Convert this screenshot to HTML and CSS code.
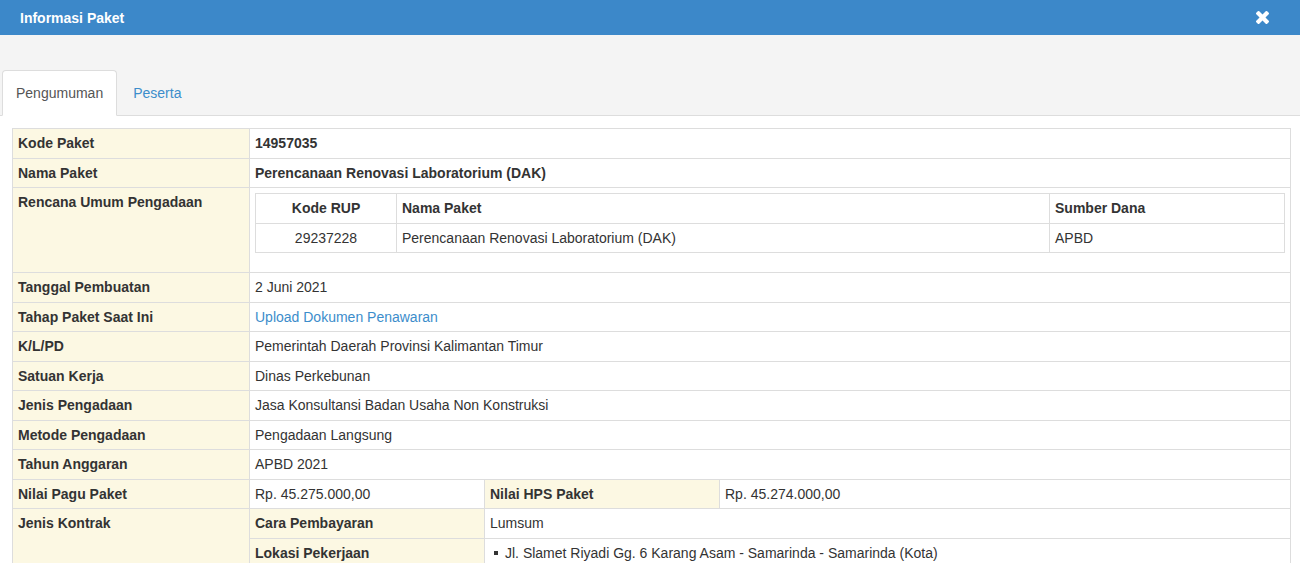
FILE: index.html
```html
<!DOCTYPE html>
<html lang="id">
<head>
<meta charset="utf-8">
<title>Informasi Paket</title>
<link rel="stylesheet" href="styles.css">
</head>
<body>
<div class="modal">
  <div class="modal-header">
    <h4 class="modal-title">Informasi Paket</h4>
    <button class="close" type="button" aria-label="Tutup">
      <svg viewBox="0 0 1188 1188" width="13" height="13"><path fill="#fff" d="M1188 956q0 40-28 68l-136 136q-28 28-68 28t-68-28l-294-294-294 294q-28 28-68 28t-68-28l-136-136q-28-28-28-68t28-68l294-294-294-294q-28-28-28-68t28-68l136-136q28-28 68-28t68 28l294 294 294-294q28-28 68-28t68 28l136 136q28 28 28 68t-28 68l-294 294 294 294q28 28 28 68z"/></svg>
    </button>
  </div>
  <div class="modal-body">
    <ul class="nav-tabs">
      <li class="active"><a href="#">Pengumuman</a></li>
      <li><a href="#">Peserta</a></li>
    </ul>
    <div class="tab-content">
      <table class="info">
        <colgroup>
          <col class="c-label">
          <col class="c-mid">
          <col class="c-mid">
          <col>
        </colgroup>
        <tbody>
          <tr><th>Kode Paket</th><td colspan="3" class="strong">14957035</td></tr>
          <tr><th>Nama Paket</th><td colspan="3" class="strong">Perencanaan Renovasi Laboratorium (DAK)</td></tr>
          <tr><th>Rencana Umum Pengadaan</th>
            <td colspan="3">
              <table class="rup">
                <colgroup><col class="r1"><col class="r2"><col></colgroup>
                <thead>
                  <tr><th class="center">Kode RUP</th><th>Nama Paket</th><th>Sumber Dana</th></tr>
                </thead>
                <tbody>
                  <tr><td class="center">29237228</td><td>Perencanaan Renovasi Laboratorium (DAK)</td><td>APBD</td></tr>
                </tbody>
              </table>
            </td>
          </tr>
          <tr><th>Tanggal Pembuatan</th><td colspan="3">2 Juni 2021</td></tr>
          <tr><th>Tahap Paket Saat Ini</th><td colspan="3"><a class="link" href="#">Upload Dokumen Penawaran</a></td></tr>
          <tr><th>K/L/PD</th><td colspan="3">Pemerintah Daerah Provinsi Kalimantan Timur</td></tr>
          <tr><th>Satuan Kerja</th><td colspan="3">Dinas Perkebunan</td></tr>
          <tr><th>Jenis Pengadaan</th><td colspan="3">Jasa Konsultansi Badan Usaha Non Konstruksi</td></tr>
          <tr><th>Metode Pengadaan</th><td colspan="3">Pengadaan Langsung</td></tr>
          <tr><th>Tahun Anggaran</th><td colspan="3">APBD 2021</td></tr>
          <tr><th>Nilai Pagu Paket</th><td>Rp. 45.275.000,00</td><th>Nilai HPS Paket</th><td>Rp. 45.274.000,00</td></tr>
          <tr><th rowspan="2">Jenis Kontrak</th><th>Cara Pembayaran</th><td colspan="2">Lumsum</td></tr>
          <tr><th>Lokasi Pekerjaan</th>
            <td colspan="2">
              <ul class="lokasi">
                <li>Jl. Slamet Riyadi Gg. 6 Karang Asam - Samarinda - Samarinda (Kota)</li>
              </ul>
            </td>
          </tr>
        </tbody>
      </table>
    </div>
  </div>
</div>
</body>
</html>
```

FILE: styles.css
```css
html, body {
  margin: 0;
  padding: 0;
  background: #ffffff;
}

body {
  font-family: "Liberation Sans", Arial, sans-serif;
  font-size: 14px;
  color: #333333;
}

.modal-header {
  height: 35px;
  box-sizing: border-box;
  background: #3c88c9;
  display: flex;
  align-items: center;
  justify-content: space-between;
  padding: 0 31px 0 20px;
}

.modal-title {
  margin: 0;
  font-size: 14px;
  font-weight: bold;
  color: #ffffff;
  line-height: 20px;
}

.close {
  border: 0;
  background: transparent;
  padding: 0;
  display: flex;
  cursor: pointer;
}

.modal-body {
  background: #f4f4f4;
  padding-top: 35px;
}

.nav-tabs {
  list-style: none;
  margin: 0;
  padding: 0 0 0 2px;
  display: flex;
  border-bottom: 1px solid #dddddd;
}

.nav-tabs li {
  margin: 0 2px -1px 0;
}

.nav-tabs a {
  display: block;
  padding: 12px 13px;
  line-height: 20px;
  border: 1px solid transparent;
  border-radius: 4px 4px 0 0;
  color: #3c8dcb;
  text-decoration: none;
}

.nav-tabs .active a {
  background: #ffffff;
  border-color: #dddddd;
  border-bottom-color: transparent;
  color: #555555;
}

.tab-content {
  background: #ffffff;
  padding: 12px 9px 0 12px;
}

.info {
  width: 100%;
  border-collapse: collapse;
  table-layout: fixed;
}

.c-label {
  width: 237px;
}

.c-mid {
  width: 235px;
}

.info th,
.info td {
  border: 1px solid #dddddd;
  padding: 5px;
  line-height: 18.5px;
  text-align: left;
  vertical-align: top;
}

.info > tbody > tr > th {
  background: #fcf8e3;
  font-weight: bold;
}

.info td.strong {
  font-weight: bold;
}

.link {
  color: #3c8dcb;
  text-decoration: none;
}

.rup {
  width: 100%;
  border-collapse: collapse;
  table-layout: fixed;
  margin-bottom: 14px;
}

.rup .r1 {
  width: 141px;
}

.rup .r2 {
  width: 653px;
}

.rup th,
.rup td {
  background: #ffffff;
  font-weight: normal;
}

.rup th {
  font-weight: bold;
}

.rup .center {
  text-align: center;
}

.lokasi {
  list-style: none;
  margin: 0;
  padding: 0;
}

.lokasi li {
  display: flex;
  align-items: center;
}

.lokasi li::before {
  content: "";
  width: 4px;
  height: 4px;
  background: #333333;
  margin: 0 7px 0 4px;
  flex: none;
}
```
